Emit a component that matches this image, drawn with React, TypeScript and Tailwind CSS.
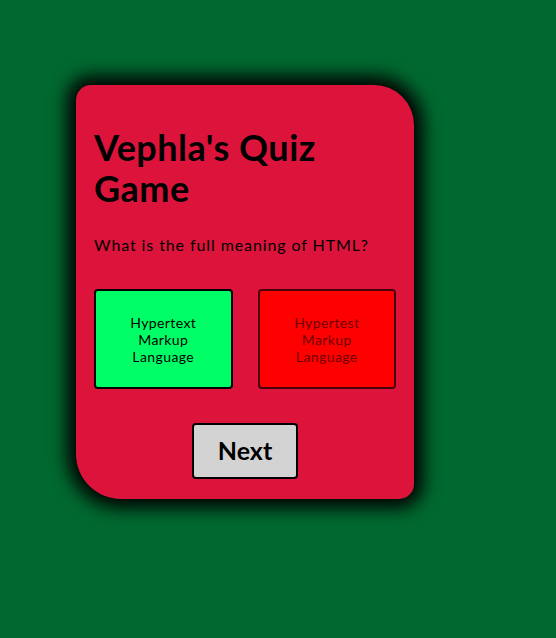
import React, { useState } from "react";

const answers = [
  { label: "Hypertext Markup Language", correct: true },
  { label: "Hypertest Markup Language", correct: false },
];

const App = () => {
  const [picked] = useState<number | null>(0);

  return (
    <div
      className="min-h-screen bg-[#006930] pt-[85px] pl-[76px]"
      style={{ fontFamily: "Lato, 'Open Sans', sans-serif" }}
    >
      <div className="w-[338px] bg-[#dc143c] rounded-tl-[15px] rounded-tr-[40px] rounded-bl-[45px] rounded-br-[15px] shadow-[0_0_18px_9px_#000] px-[18px] pt-[42px] pb-[20px]">
        <h1 className="text-[36px] leading-[41px] font-bold text-black tracking-[0.5px]">
          Vephla's Quiz
          <br />
          Game
        </h1>
        <p className="mt-[26px] text-[16px] leading-[20px] text-black tracking-[0.9px]">
          What is the full meaning of HTML?
        </p>
        <div className="mt-[34px] grid grid-cols-2 gap-[25px]">
          {answers.map((a, i) => (
            <button
              key={i}
              className={
                a.correct
                  ? "h-[100px] rounded-[4px] border-2 border-black bg-[#00ff66] text-black text-[14px] leading-[17px] tracking-[0.4px] px-8"
                  : "h-[100px] rounded-[4px] border-2 border-[#4a0008] bg-[#ff0000] text-[#6e0000] text-[14px] leading-[17px] tracking-[0.4px] px-8"
              }
              disabled={picked !== null}
            >
              {a.label}
            </button>
          ))}
        </div>
        <div className="mt-[34px] flex justify-center">
          <button className="w-[106px] h-[56px] rounded-[4px] border-2 border-black bg-[#d3d3d3] text-[25px] font-bold text-black">
            Next
          </button>
        </div>
      </div>
    </div>
  );
};

export default App;
